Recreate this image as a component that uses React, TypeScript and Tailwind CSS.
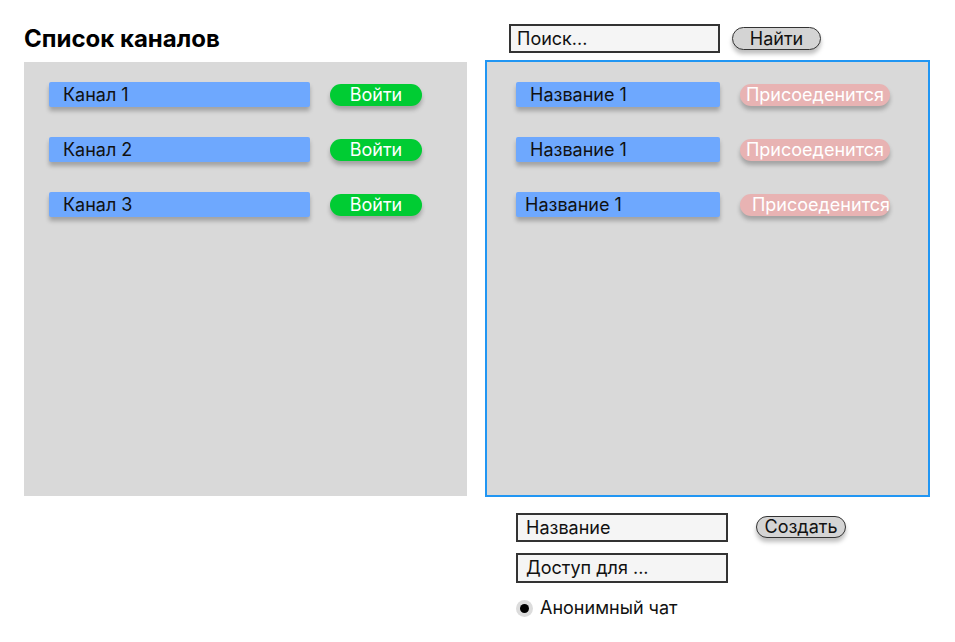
import React from "react";

const font = { fontFamily: "Inter, 'Noto Sans', sans-serif" };

function LeftRow({ label }: { label: string }) {
  return (
    <div className="flex items-center">
      <div className="w-[261px] h-[25px] bg-[#6ea8fe] rounded-[2px] shadow-[0_4px_4px_rgba(0,0,0,0.25)] pl-[14px] flex items-center text-[18px] text-[#111] leading-none">
        {label}
      </div>
      <div className="ml-[20px] w-[92px] h-[22px] rounded-full bg-[#00cc33] shadow-[0_4px_4px_rgba(0,0,0,0.25)] flex items-center justify-center text-white text-[18px] leading-none">
        Войти
      </div>
    </div>
  );
}

function RightRow({ label, shifted }: { label: string; shifted?: boolean }) {
  return (
    <div className="flex items-center">
      <div
        className={
          shifted
            ? "w-[204px] h-[25px] bg-[#6ea8fe] rounded-[2px] shadow-[0_4px_4px_rgba(0,0,0,0.25)] pl-[9px] flex items-center text-[18px] text-[#111] leading-none"
            : "w-[204px] h-[25px] bg-[#6ea8fe] rounded-[2px] shadow-[0_4px_4px_rgba(0,0,0,0.25)] pl-[14px] flex items-center text-[18px] text-[#111] leading-none"
        }
      >
        {label}
      </div>
      <div
        className={
          shifted
            ? "ml-[20px] w-[150px] h-[22px] rounded-full bg-[#e8b3b3] shadow-[0_4px_4px_rgba(0,0,0,0.25)] flex items-center justify-end pr-[0px] text-white text-[18px] leading-none overflow-hidden"
            : "ml-[20px] w-[150px] h-[22px] rounded-full bg-[#e8b3b3] shadow-[0_4px_4px_rgba(0,0,0,0.25)] flex items-center justify-center text-white text-[18px] leading-none"
        }
      >
        Присоеденится
      </div>
    </div>
  );
}

export default function App() {
  return (
    <div className="w-[955px] h-[642px] bg-white flex" style={font}>
      <div className="ml-[24px] w-[443px] flex flex-col">
        <div className="mt-[26px] h-[36px] text-[24px] font-bold text-black leading-[26px]">
          Список каналов
        </div>
        <div className="h-[434px] bg-[#d9d9d9] pt-[20px] pl-[25px] flex flex-col gap-[30px]">
          <LeftRow label="Канал 1" />
          <LeftRow label="Канал 2" />
          <LeftRow label="Канал 3" />
        </div>
      </div>
      <div className="ml-[18px] w-[445px] flex flex-col">
        <div className="mt-[24px] ml-[24px] flex items-center">
          <div className="w-[211px] h-[29px] border-2 border-[#333] bg-[#f5f5f5] pl-[6px] flex items-center text-[18px] text-[#111] leading-none">
            Поиск...
          </div>
          <div className="ml-[12px] w-[89px] h-[23px] border-[1.5px] border-[#333] bg-[#d4d4d4] rounded-full shadow-[0_4px_4px_rgba(0,0,0,0.25)] flex items-center justify-center text-[18px] text-[#111] leading-none">
            Найти
          </div>
        </div>
        <div className="mt-[7px] h-[437px] border-2 border-[#2196f3] bg-[#d9d9d9] pt-[20px] pl-[29px] flex flex-col gap-[30px]">
          <RightRow label="Название 1" />
          <RightRow label="Название 1" />
          <RightRow label="Название 1" shifted />
        </div>
        <div className="mt-[16px] ml-[31px] flex items-start">
          <div className="flex flex-col gap-[11px]">
            <div className="w-[212px] h-[29px] border-2 border-[#333] bg-[#f5f5f5] pl-[8px] flex items-center text-[18px] text-[#111] leading-none">
              Название
            </div>
            <div className="w-[212px] h-[30px] border-2 border-[#333] bg-[#f5f5f5] pl-[8px] flex items-center text-[18px] text-[#111] leading-none">
              Доступ для ...
            </div>
          </div>
          <div className="ml-[28px] mt-[3px] w-[90px] h-[22px] border-[1.5px] border-[#333] bg-[#d4d4d4] rounded-full shadow-[0_4px_4px_rgba(0,0,0,0.25)] flex items-center justify-center text-[18px] text-[#111] leading-none">
            Создать
          </div>
        </div>
        <div className="mt-[16px] ml-[31px] flex items-center">
          <div className="w-[17px] h-[17px] rounded-full bg-[#dcdcdc] flex items-center justify-center">
            <div className="w-[9px] h-[9px] rounded-full bg-black" />
          </div>
          <span className="ml-[7px] text-[18px] text-[#111] leading-none">Анонимный чат</span>
        </div>
      </div>
    </div>
  );
}
